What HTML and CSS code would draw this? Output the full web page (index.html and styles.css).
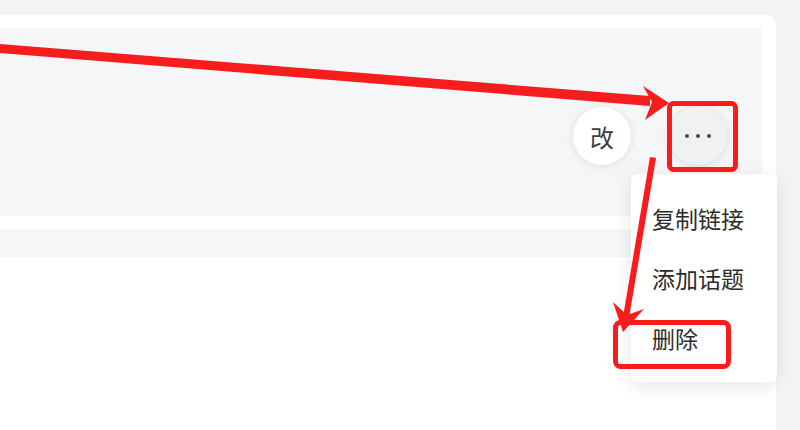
FILE: index.html
```html
<!DOCTYPE html>
<html lang="zh">
<head>
<meta charset="utf-8">
<link rel="stylesheet" href="styles.css">
</head>
<body>
<div class="page">
  <div class="card">
    <div class="panel">
      <div class="actions">
        <button class="circle edit">改</button>
        <div class="more-wrap">
          <button class="circle more"><span class="dot"></span><span class="dot"></span><span class="dot"></span></button>
          <ul class="menu">
            <li>复制链接</li>
            <li>添加话题</li>
            <li>删除</li>
          </ul>
        </div>
      </div>
    </div>
    <div class="strip"></div>
    <div class="rest"></div>
  </div>
</div>
<svg class="annot" width="800" height="430" viewBox="0 0 800 430">
  <g fill="#f81d1d" stroke="none">
    <polygon points="0,44 650,96 650,106 0,53"/>
    <polygon points="643,86 669,103 645,120 652,102"/>
    <polygon points="650,157 656,158 629,318 623,317"/>
    <polygon points="613,302 623,332 644,309 627,315"/>
  </g>
  <g fill="none" stroke="#f81d1d" stroke-width="5">
    <rect x="669.5" y="103.5" width="66" height="66" rx="4"/>
    <rect x="615.5" y="322.5" width="113" height="44" rx="5"/>
  </g>
</svg>
</body>
</html>
```
FILE: styles.css
```css
html, body {
  margin: 0;
  padding: 0;
}
body {
  background: #f3f4f6;
  width: 800px;
  height: 430px;
  overflow: hidden;
  position: relative;
  font-family: "Noto Sans CJK SC", "Noto Sans", sans-serif;
}
.page {
  padding-top: 15px;
}
.card {
  width: 776px;
  height: 415px;
  background: #ffffff;
  border-top-right-radius: 11px;
  box-sizing: border-box;
  padding: 13px 14px 0 0;
  display: flex;
  flex-direction: column;
}
.panel {
  height: 188px;
  background: #f5f6f8;
  border-top-right-radius: 4px;
  border-bottom-right-radius: 4px;
  box-sizing: border-box;
  padding: 79px 35px 0 0;
}
.actions {
  display: flex;
  justify-content: flex-end;
  align-items: center;
  gap: 38px;
}
.circle {
  width: 58px;
  height: 58px;
  border-radius: 50%;
  border: none;
  padding: 0;
  margin: 0;
  display: flex;
  align-items: center;
  justify-content: center;
  font-family: inherit;
}
.edit {
  background: #ffffff;
  box-shadow: 0 1px 8px rgba(0, 0, 0, 0.10);
  font-size: 24px;
  color: #404040;
}
.more {
  background: #f0f1f3;
  box-shadow: 0 1px 8px rgba(0, 0, 0, 0.12);
  gap: 7px;
}
.dot {
  width: 4px;
  height: 4px;
  border-radius: 50%;
  background: #4a4a4a;
}
.more-wrap {
  position: relative;
}
.menu {
  position: absolute;
  left: -38px;
  top: 67px;
  width: 146px;
  height: 208px;
  margin: 0;
  padding: 14px 0 0 21px;
  box-sizing: border-box;
  list-style: none;
  background: #ffffff;
  border-radius: 6px;
  box-shadow: 0 4px 18px rgba(0, 0, 0, 0.10);
  z-index: 5;
}
.menu li {
  height: 60px;
  line-height: 60px;
  font-size: 23px;
  color: #2b2b2b;
  white-space: nowrap;
}
.strip {
  margin-top: 14px;
  height: 26px;
  background: #f5f6f7;
  border-top: 1px solid #eeeff1;
}
.rest {
  flex: 1;
}
.annot {
  position: absolute;
  left: 0;
  top: 0;
  z-index: 10;
  pointer-events: none;
}
```
